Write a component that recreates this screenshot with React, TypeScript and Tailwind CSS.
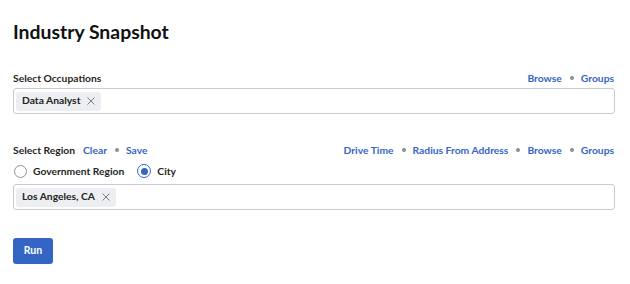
import React from "react";

const Dot = () => <span className="ml-[8px] mr-[7px] inline-block h-[4px] w-[4px] rounded-full bg-[#8a8f96]" />;

const Chip = ({ label }: { label: string }) => (
  <span className="inline-flex h-[19px] items-center rounded-[3px] bg-[#eceef1] pl-[6px] pr-[6px] text-[10.3px] font-bold text-[#222]">
    {label}
    <svg className="ml-[7px]" width="8" height="8" viewBox="0 0 8 8">
      <path d="M0.5 0.5L7.5 7.5M7.5 0.5L0.5 7.5" stroke="#7a7f87" strokeWidth="1" />
    </svg>
  </span>
);

export default function App() {
  return (
    <div className="w-[630px] h-[284px] bg-white px-[13px] pt-[20px] text-[#1a1a1a]" style={{ fontFamily: "Lato, 'Open Sans', sans-serif" }}>
      <h1 className="text-[19.4px] font-bold leading-[24px] text-[#111]">Industry Snapshot</h1>

      <div className="mt-[27px] flex items-center justify-between pr-[3px] text-[10.3px] font-bold leading-[14px]">
        <span className="text-[#1f1f1f]">Select Occupations</span>
        <span className="flex items-center text-[#3565c4]">
          <span>Browse</span>
          <Dot />
          <span>Groups</span>
        </span>
      </div>
      <div className="mt-[3px] flex h-[26px] w-[602px] items-center rounded-[3px] border border-[#c8cbd0] px-[2px]">
        <Chip label="Data Analyst" />
      </div>

      <div className="mt-[29px] flex items-center justify-between pr-[3px] text-[10.3px] font-bold leading-[14px]">
        <span className="flex items-center">
          <span className="text-[#1f1f1f]">Select Region</span>
          <span className="ml-[8px] text-[#3565c4]">Clear</span>
          <Dot />
          <span className="text-[#3565c4]">Save</span>
        </span>
        <span className="flex items-center text-[#3565c4]">
          <span>Drive Time</span>
          <Dot />
          <span>Radius From Address</span>
          <Dot />
          <span>Browse</span>
          <Dot />
          <span>Groups</span>
        </span>
      </div>
      <div className="mt-[7px] flex items-center text-[10.3px] font-bold leading-[14px] text-[#1f1f1f]">
        <span className="ml-[1px] inline-block h-[13px] w-[13px] rounded-full border border-[#8f949b] bg-white" />
        <span className="ml-[6px]">Government Region</span>
        <span className="ml-[13px] inline-flex h-[14px] w-[14px] items-center justify-center rounded-full border-[1.5px] border-[#3565c4] bg-white">
          <span className="h-[7px] w-[7px] rounded-full bg-[#3565c4]" />
        </span>
        <span className="ml-[6px]">City</span>
      </div>
      <div className="mt-[6px] flex h-[26px] w-[602px] items-center rounded-[3px] border border-[#c8cbd0] px-[2px]">
        <Chip label="Los Angeles, CA" />
      </div>

      <button className="mt-[28px] h-[26px] w-[40px] rounded-[3px] bg-[#3565c4] text-[10.5px] font-bold text-white">Run</button>
    </div>
  );
}
